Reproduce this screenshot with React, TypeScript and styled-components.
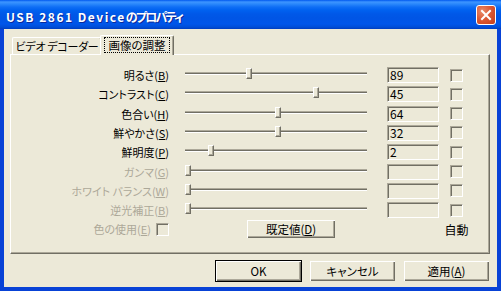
import React from "react";
import styled, { createGlobalStyle } from "styled-components";

const ui = {
  face: "#ECE9D8",
  light: "#FFFFFF",
  shadow: "#ACA899",
  dark: "#716F64",
  disabled: "#ACA899",
  text: "#000000",
};

const GlobalStyle = createGlobalStyle`
  html, body {
    margin: 0;
    padding: 0;
    background: ${ui.face};
  }
  body {
    font-family: "Noto Sans CJK JP", "Liberation Sans", sans-serif;
    font-size: 11px;
    font-feature-settings: "palt";
    color: ${ui.text};
  }
`;

const Window = styled.div`
  width: 501px;
  height: 291px;
  display: flex;
  flex-direction: column;
  overflow: hidden;
`;

const TitleBar = styled.div`
  flex: none;
  height: 29px;
  box-sizing: border-box;
  padding: 0 5px 0 6px;
  display: flex;
  align-items: center;
  justify-content: space-between;
  background: linear-gradient(
    to bottom,
    #0058ee 0px,
    #3d95ff 2px,
    #2a88fb 4px,
    #0f6ef5 7px,
    #0062f0 10px,
    #0058e8 14px,
    #0055e5 18px,
    #0056ea 24px,
    #004ed8 27px,
    #003dbf 29px
  );
`;

const Title = styled.span`
  color: #fff;
  font-weight: bold;
  font-size: 12px;
  letter-spacing: 1.5px;
  padding-top: 3px;
  text-shadow: 1px 1px 0 #0a2a9c;
  white-space: nowrap;
`;

const TitleKana = styled.span`
  letter-spacing: -1.8px;
`;

const CloseButton = styled.div`
  width: 20px;
  height: 20px;
  box-sizing: border-box;
  border: 1px solid #fff;
  border-radius: 3px;
  background: radial-gradient(circle at 30% 30%, #e98c6b 0%, #dc5a36 45%, #c63d17 100%);
  display: flex;
  align-items: center;
  justify-content: center;
`;

const Frame = styled.div`
  flex: 1;
  display: flex;
  flex-direction: column;
  background: ${ui.face};
  border: 4px solid #0842d6;
  border-top: 0;
  padding: 6px 7px 5px 6px;
`;

const TabStrip = styled.div`
  flex: none;
  height: 19px;
  display: flex;
  align-items: flex-end;
  padding-left: 2px;
  position: relative;
  z-index: 1;
`;

const Tab = styled.div<{ $active?: boolean; $width: number }>`
  box-sizing: border-box;
  width: ${(p) => p.$width}px;
  height: ${(p) => (p.$active ? 20 : 17)}px;
  margin: ${(p) => (p.$active ? "0 -2px -1px" : "0")};
  background: ${ui.face};
  border-top: 1px solid ${ui.light};
  border-left: 1px solid ${ui.light};
  border-right: 1px solid ${ui.dark};
  border-radius: 2px 2px 0 0;
  box-shadow: inset -1px 0 0 ${ui.shadow};
  display: flex;
  align-items: ${(p) => (p.$active ? "flex-start" : "center")};
  justify-content: center;
  white-space: nowrap;
  padding-top: ${(p) => (p.$active ? "1px" : "0")};
  font-size: 11px;
  letter-spacing: ${(p) => (p.$active ? "0" : "-0.3px")};
`;

const FocusRect = styled.span`
  border: 1px dotted #000;
  padding: 0 3px;
  height: 16px;
  box-sizing: border-box;
  line-height: 14px;
  font-size: 11.5px;
`;

const Panel = styled.div`
  flex: 1;
  box-sizing: border-box;
  border: 1px solid;
  border-color: ${ui.light} ${ui.dark} ${ui.dark} ${ui.light};
  box-shadow: inset -1px -1px 0 ${ui.shadow};
  padding-top: 12px;
  display: flex;
  flex-direction: column;
`;

const ControlGrid = styled.div<{ $rowHeight: number }>`
  display: grid;
  grid-template-columns: 170px 206px 63px 13px;
  grid-auto-rows: ${(p) => p.$rowHeight}px;
  row-gap: 3.33px;
  align-items: center;
`;

const FooterGrid = styled(ControlGrid)`
  margin-top: 2px;
`;

const Label = styled.span<{ $disabled?: boolean }>`
  display: flex;
  align-items: center;
  justify-content: flex-end;
  gap: 5px;
  padding-right: 12px;
  color: ${(p) => (p.$disabled ? ui.disabled : ui.text)};
  white-space: nowrap;
  line-height: 16px;
  font-size: 11px;
`;

const Slider = styled.div`
  position: relative;
  width: 190px;
  height: 16px;
`;

const Track = styled.div`
  position: absolute;
  left: 4px;
  right: 4px;
  top: 5px;
  height: 1px;
  background: ${ui.dark};
  border-top: 1px solid ${ui.shadow};
  border-bottom: 1px solid ${ui.light};
`;

const Thumb = styled.div`
  position: absolute;
  top: 1px;
  width: 6px;
  height: 11px;
  box-sizing: border-box;
  background: ${ui.face};
  border-left: 1px solid ${ui.light};
  border-top: 1px solid ${ui.light};
  border-right: 1px solid ${ui.dark};
  border-bottom: 1px solid ${ui.dark};
  box-shadow: inset -1px -1px 0 ${ui.shadow};
`;

const ValueBox = styled.div`
  width: 52px;
  height: 16px;
  box-sizing: border-box;
  border: 1px solid;
  border-color: ${ui.shadow} ${ui.light} ${ui.light} ${ui.shadow};
  box-shadow: inset 1px 1px 0 ${ui.dark};
  padding-left: 2px;
  line-height: 14px;
  font-size: 12px;
`;

const CheckBox = styled.div`
  width: 13px;
  height: 13px;
  box-sizing: border-box;
  border: 1px solid;
  border-color: ${ui.shadow} ${ui.light} ${ui.light} ${ui.shadow};
  box-shadow: inset 1px 1px 0 ${ui.dark};
  background: ${ui.face};
`;

const PushButton = styled.div<{ $default?: boolean; $width: number; $height: number }>`
  width: ${(p) => p.$width}px;
  height: ${(p) => p.$height}px;
  box-sizing: border-box;
  background: ${ui.face};
  border: 1px solid ${(p) => (p.$default ? "#000" : ui.face)};
  box-shadow: inset 1px 1px 0 ${ui.light}, inset -1px -1px 0 ${ui.dark},
    inset -2px -2px 0 ${ui.shadow};
  display: flex;
  align-items: center;
  justify-content: center;
  white-space: nowrap;
  font-size: 11.5px;
`;

const DefaultsButton = styled(PushButton)`
  margin-left: 66px;
  border: 0;
`;

const AutoLabel = styled.span`
  justify-self: center;
  white-space: nowrap;
  font-size: 12px;
`;

const ButtonRow = styled.div`
  flex: none;
  margin-top: 6px;
  display: flex;
  justify-content: flex-end;
  gap: 7px;
`;

type Row = {
  label: string;
  key: string;
  value?: string;
  pos: number;
  disabled?: boolean;
};

const rows: Row[] = [
  { label: "明るさ", key: "B", value: "89", pos: 0.35 },
  { label: "コントラスト", key: "C", value: "45", pos: 0.72 },
  { label: "色合い", key: "H", value: "64", pos: 0.51 },
  { label: "鮮やかさ", key: "S", value: "32", pos: 0.51 },
  { label: "鮮明度", key: "P", value: "2", pos: 0.143 },
  { label: "ガンマ", key: "G", pos: 0.016, disabled: true },
  { label: "ホワイト バランス", key: "W", pos: 0.016, disabled: true },
  { label: "逆光補正", key: "B", pos: 0.016, disabled: true },
];

const TRACK_LEN = 182;

const Mnemonic = ({ text, k }: { text: string; k: string }) => (
  <span>
    {text}(<u>{k}</u>)
  </span>
);

export default function App() {
  return (
    <Window>
      <GlobalStyle />
      <TitleBar>
        <Title>
          USB 2861 Device<TitleKana>のプロパティ</TitleKana>
        </Title>
        <CloseButton>
          <svg width="12" height="12" viewBox="0 0 12 12">
            <path d="M2 2 L10 10 M10 2 L2 10" stroke="#fff" strokeWidth="2" strokeLinecap="square" />
          </svg>
        </CloseButton>
      </TitleBar>
      <Frame>
        <TabStrip>
          <Tab $width={90}>ビデオ デコーダー</Tab>
          <Tab $width={74} $active>
            <FocusRect>画像の調整</FocusRect>
          </Tab>
        </TabStrip>
        <Panel>
          <ControlGrid $rowHeight={16}>
            {rows.map((r, i) => (
              <React.Fragment key={i}>
                <Label $disabled={r.disabled}>
                  <Mnemonic text={r.label} k={r.key} />
                </Label>
                <Slider>
                  <Track />
                  <Thumb style={{ left: 4 + r.pos * TRACK_LEN - 3 }} />
                </Slider>
                <ValueBox>{r.value}</ValueBox>
                <CheckBox />
              </React.Fragment>
            ))}
          </ControlGrid>
          <FooterGrid $rowHeight={18}>
            <Label $disabled>
              <Mnemonic text="色の使用" k="E" />
              <CheckBox />
            </Label>
            <DefaultsButton $width={88} $height={18}>
              <Mnemonic text="既定値" k="D" />
            </DefaultsButton>
            <span />
            <AutoLabel>自動</AutoLabel>
          </FooterGrid>
        </Panel>
        <ButtonRow>
          <PushButton $width={87} $height={22} $default>
            OK
          </PushButton>
          <PushButton $width={87} $height={22}>
            キャンセル
          </PushButton>
          <PushButton $width={87} $height={22}>
            <Mnemonic text="適用" k="A" />
          </PushButton>
        </ButtonRow>
      </Frame>
    </Window>
  );
}
